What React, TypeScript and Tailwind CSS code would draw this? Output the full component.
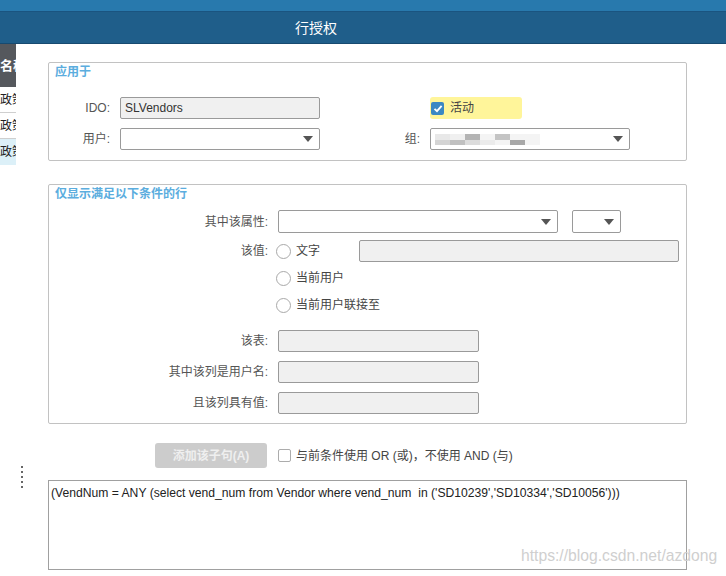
import React from "react";

const F = { fontFamily: '"Liberation Sans", "Noto Sans CJK SC", sans-serif' };

function Tri() {
  return (
    <svg width="10" height="6" viewBox="0 0 10 6" className="shrink-0">
      <polygon points="0,0 10,0 5,6" fill="#555" />
    </svg>
  );
}

function Radio({ label }: { label: string }) {
  return (
    <div className="flex items-center h-[22px]">
      <div className="w-[15px] h-[15px] rounded-full border border-[#a9a9a9] bg-white" />
      <span className="ml-[5px] text-[12px] text-[#444]">{label}</span>
    </div>
  );
}

const blurTop = ["#e8e8e8", "#f0f0f0", "#b4b4b4", "#f4f4f4", "#c4c4c4", "#f4f4f4", "#f4f4f4"];
const blurBot = ["#d4d4d4", "#c0c0c0", "#dcdcdc", "#ebebeb", "#f4f4f4", "#a8a8a8", "#f4f4f4"];

export default function App() {
  return (
    <div className="relative w-[726px] h-[576px] overflow-hidden bg-white" style={F}>
      {/* Header */}
      <div className="h-[11px] bg-[#2879ad]" />
      <div className="h-[33px] bg-[#1f5e8a] border-t border-t-[#1a5480] border-b border-b-[#174a70] flex items-center">
        <span className="ml-[295px] text-[14px] text-white leading-none">行授权</span>
      </div>

      <div className="flex">
        {/* Sidebar */}
        <div className="w-[16px] shrink-0 overflow-hidden">
          <div className="h-[43px] bg-[#55585d] flex items-center">
            <span className="text-[13px] font-bold text-white whitespace-nowrap">名称</span>
          </div>
          <div className="h-[26px] border-b border-[#cfcfcf] flex items-center">
            <span className="text-[12px] text-[#222] whitespace-nowrap">政策</span>
          </div>
          <div className="h-[26px] border-b border-[#cfcfcf] flex items-center">
            <span className="text-[12px] text-[#222] whitespace-nowrap">政策</span>
          </div>
          <div className="h-[26px] bg-[#dcf0f8] flex items-center">
            <span className="text-[12px] text-[#222] whitespace-nowrap">政策</span>
          </div>
        </div>

        {/* Main */}
        <div className="ml-[32px] w-[639px]">
          {/* Box 1 */}
          <div className="mt-[18px] h-[99px] border border-[#c2c2c2] rounded-[2px]">
            <div className="ml-[6px] mt-[1px] leading-[16px] text-[12px] font-bold text-[#5badde]">应用于</div>
            <div className="mt-[17px] flex items-center h-[22px]">
              <div className="w-[61px] text-right text-[12px] text-[#555]">IDO:</div>
              <div className="ml-[10px] w-[200px] h-[22px] bg-[#f0f0f0] border border-[#9a9a9a] rounded-[2px] flex items-center px-[4px] text-[12px] text-[#333]">
                SLVendors
              </div>
              <div className="w-[110px]" />
              <div className="w-[92px] h-[22px] bg-[#fff59a] rounded-[3px] flex items-center pl-[1px]">
                <div className="w-[13px] h-[13px] bg-[#3b88c3] rounded-[2px] flex items-center justify-center">
                  <svg width="10" height="9" viewBox="0 0 10 9">
                    <path d="M1.5 4.8 L4 7.2 L8.6 1.8" stroke="white" strokeWidth="1.8" fill="none" />
                  </svg>
                </div>
                <span className="ml-[6px] text-[12px] text-[#444]">活动</span>
              </div>
            </div>
            <div className="mt-[9px] flex items-center h-[22px]">
              <div className="w-[61px] text-right text-[12px] text-[#555]">用户:</div>
              <div className="ml-[10px] w-[200px] h-[22px] bg-white border border-[#9a9a9a] rounded-[2px] flex items-center justify-end pr-[6px]">
                <Tri />
              </div>
              <div className="w-[100px] text-right text-[12px] text-[#555]">组:</div>
              <div className="ml-[10px] w-[200px] h-[22px] bg-white border border-[#9a9a9a] rounded-[2px] flex items-center justify-between pl-[4px] pr-[6px]">
                <div className="flex flex-col">
                  <div className="flex">
                    {blurTop.map((c, i) => (
                      <div key={i} className="w-[15px] h-[6px]" style={{ background: c }} />
                    ))}
                  </div>
                  <div className="flex">
                    {blurBot.map((c, i) => (
                      <div key={i} className="w-[15px] h-[5px]" style={{ background: c }} />
                    ))}
                  </div>
                </div>
                <Tri />
              </div>
            </div>
          </div>

          {/* Box 2 */}
          <div className="mt-[23px] h-[240px] border border-[#c2c2c2] rounded-[2px]">
            <div className="ml-[6px] mt-[1px] leading-[16px] text-[12px] font-bold text-[#5badde]">仅显示满足以下条件的行</div>
            <div className="mt-[8px] flex items-center h-[23px]">
              <div className="w-[219px] text-right text-[12px] text-[#555]">其中该属性:</div>
              <div className="ml-[10px] w-[280px] h-[23px] bg-white border border-[#9a9a9a] rounded-[2px] flex items-center justify-end pr-[6px]">
                <Tri />
              </div>
              <div className="ml-[14px] w-[49px] h-[23px] bg-white border border-[#9a9a9a] rounded-[2px] flex items-center justify-end pr-[6px]">
                <Tri />
              </div>
            </div>
            <div className="mt-[7px] flex items-start">
              <div className="w-[219px] h-[22px] flex items-center justify-end text-[12px] text-[#555]">该值:</div>
              <div className="ml-[8px] flex flex-col gap-[5px]">
                <div className="flex items-center">
                  <div className="w-[83px]">
                    <Radio label="文字" />
                  </div>
                  <div className="w-[320px] h-[22px] bg-[#f0f0f0] border border-[#9a9a9a] rounded-[2px]" />
                </div>
                <Radio label="当前用户" />
                <Radio label="当前用户联接至" />
              </div>
            </div>
            <div className="mt-[14px] flex flex-col gap-[9px]">
              {["该表:", "其中该列是用户名:", "且该列具有值:"].map((l) => (
                <div key={l} className="flex items-center h-[22px]">
                  <div className="w-[219px] text-right text-[12px] text-[#555]">{l}</div>
                  <div className="ml-[10px] w-[201px] h-[22px] bg-[#f0f0f0] border border-[#9a9a9a] rounded-[2px]" />
                </div>
              ))}
            </div>
          </div>

          {/* Button row */}
          <div className="mt-[19px] flex items-center h-[25px]">
            <div className="ml-[107px] w-[112px] h-[25px] bg-[#cccccc] rounded-[3px] flex items-center justify-center text-[12px] font-bold text-[#efefef]">
              添加该子句(A)
            </div>
            <div className="ml-[11px] w-[13px] h-[13px] border border-[#acacac] rounded-[2px] bg-white" />
            <span className="ml-[5px] text-[12px] text-[#444]">与前条件使用 OR (或)，不使用 AND (与)</span>
          </div>

          {/* Textarea */}
          <div className="mt-[12px] h-[90px] border border-[#a0a0a0] px-[2px] pt-[5px]">
            <div className="text-[12.15px] text-[#222] whitespace-pre leading-[15px]">
              {"(VendNum = ANY (select vend_num from Vendor where vend_num  in ('SD10239','SD10334','SD10056')))"}
            </div>
          </div>
        </div>
      </div>

      {/* Dots */}
      <div className="absolute left-[21px] top-[466px] flex flex-col gap-[3px]">
        {[0, 1, 2, 3, 4].map((i) => (
          <div key={i} className="w-[2px] h-[2px] bg-[#666]" />
        ))}
      </div>

      {/* Watermark */}
      <div className="absolute left-[521px] top-[546px] text-[15.7px] text-[#cfcfcf] leading-[20px] whitespace-nowrap">
        https://blog.csdn.net/azdong
      </div>
    </div>
  );
}
